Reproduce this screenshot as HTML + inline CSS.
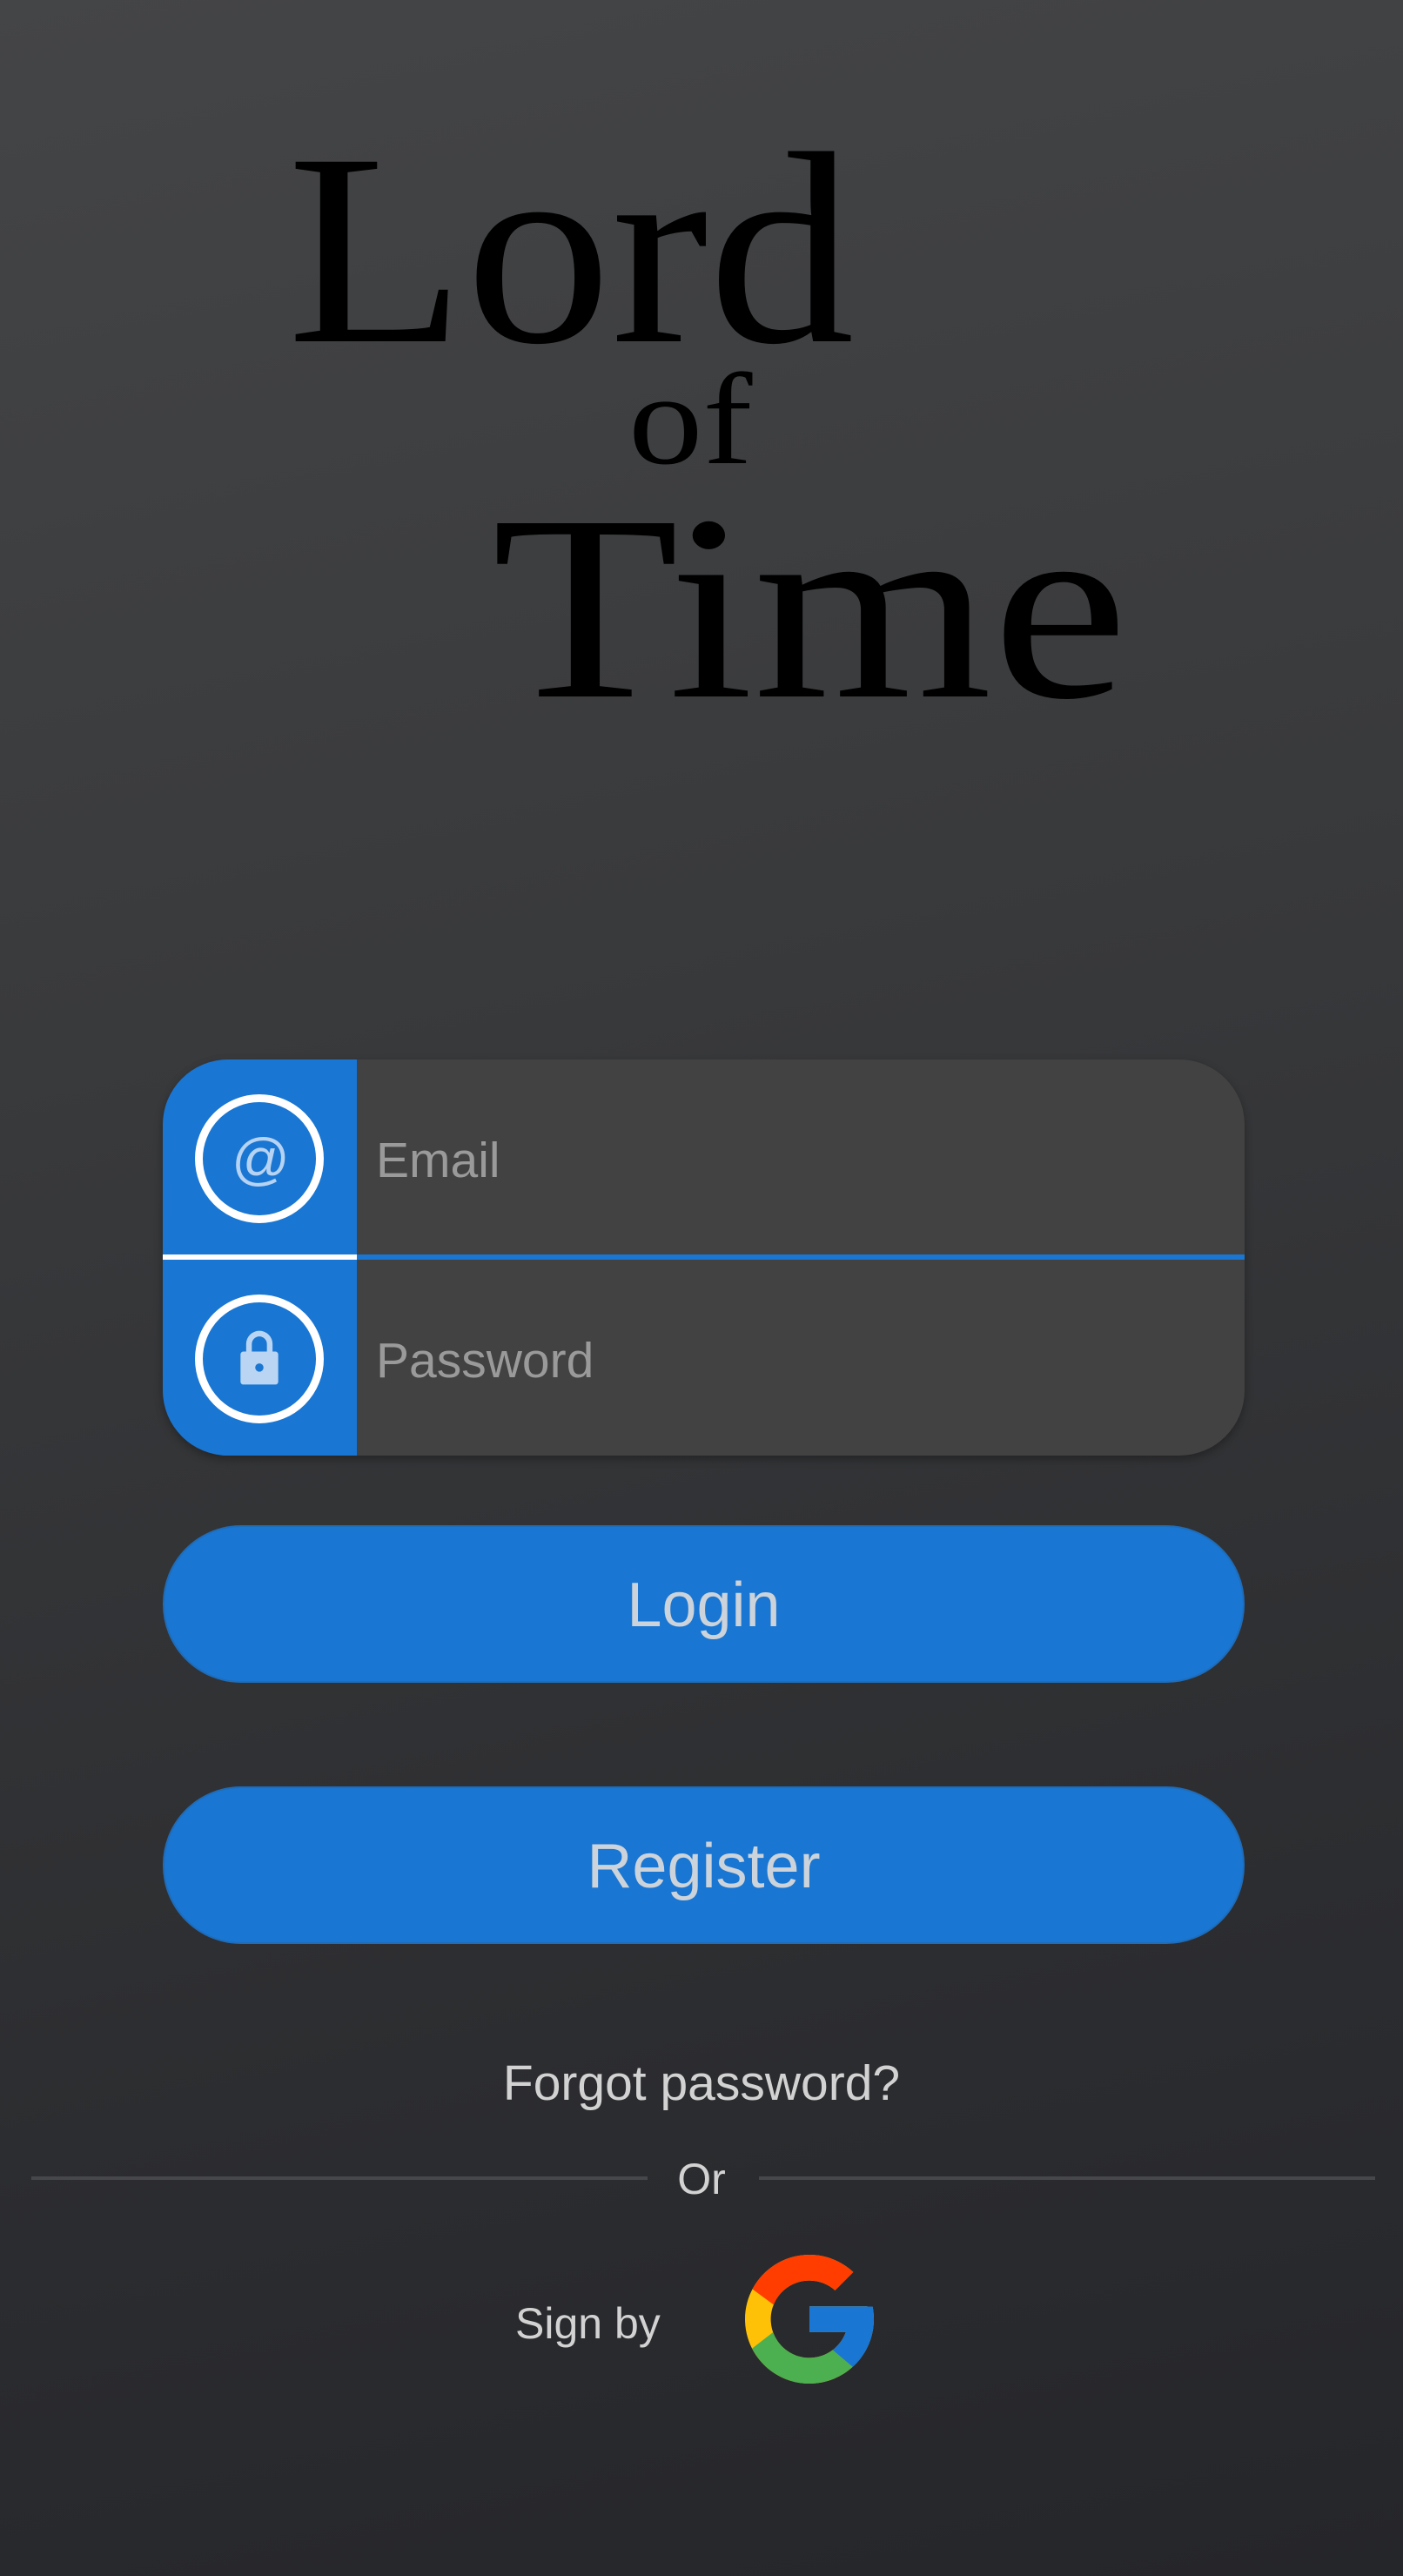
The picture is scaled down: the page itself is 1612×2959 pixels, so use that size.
<!DOCTYPE html>
<html><head><meta charset="utf-8"><style>
*{margin:0;padding:0;box-sizing:border-box}
html,body{width:1612px;height:2959px;overflow:hidden}
body{background:linear-gradient(168deg,#444547 0%,#38393b 40%,#2c2d30 75%,#25262a 100%);font-family:"Liberation Sans",sans-serif;position:relative}
.logo{position:absolute;font-family:"Liberation Serif",serif;color:#000;line-height:1;transform-origin:0 0;white-space:nowrap}
.box{position:absolute;left:187px;top:1217px;width:1243px;height:455px;border-radius:75px;overflow:hidden;background:#424242;box-shadow:0 4px 10px rgba(0,0,0,.3)}
.col{position:absolute;left:0;top:0;width:223px;height:100%;background:#1976d2}
.ring{position:absolute;width:148px;height:148px;border:9px solid #fff;border-radius:50%}
.ph{position:absolute;left:432px;font-size:57px;color:#9a9a9a}
.btn{position:absolute;left:187px;width:1243px;height:181px;border-radius:90px;background:#1976d2;color:#ccd3da;font-size:72px;text-align:center;line-height:181px;border:2px solid #1f6cb8}
.t{position:absolute;color:#d2d2d2;text-align:center}
.line{position:absolute;top:2500px;height:4px;background:#46474a}
</style></head><body>
<div class="logo" style="left:330px;top:129px;font-size:315px;transform:scaleX(1.064)">Lord</div>
<div class="logo" style="left:722px;top:407px;font-size:150px;transform:scaleX(1.14)">of</div>
<div class="logo" style="left:565px;top:546px;font-size:304px;transform:scaleX(1.159)">Time</div>

<div class="box">
 <div class="col"></div>
 <div style="position:absolute;left:0;top:224px;width:223px;height:6px;background:#fff"></div>
 <div style="position:absolute;left:223px;top:224px;width:1020px;height:6px;background:#1976d2"></div>
</div>
<div class="ring" style="left:224px;top:1257px"></div>
<div class="ring" style="left:224px;top:1487px"></div>
<div style="position:absolute;left:266px;top:1291px;font-size:66px;color:#b6d3f3;width:64px;text-align:center;line-height:80px">@</div>
<svg style="position:absolute;left:272px;top:1526px" width="52" height="66" viewBox="0 0 24 30"><path fill="#b9d5f3" d="M5 12V8a7 7 0 0 1 14 0v4h1.5a1.5 1.5 0 0 1 1.5 1.5V28a1.5 1.5 0 0 1-1.5 1.5h-17A1.5 1.5 0 0 1 2 28V13.5A1.5 1.5 0 0 1 3.5 12zM8 12h8V8a4 4 0 0 0-8 0z"/><circle cx="12" cy="20.5" r="2.2" fill="#1976d2"/></svg>
<div class="ph" style="top:1300px">Email</div>
<div class="ph" style="top:1530px">Password</div>

<div class="btn" style="top:1752px">Login</div>
<div class="btn" style="top:2052px">Register</div>

<div class="t" style="left:0;width:1612px;top:2360px;font-size:57px">Forgot password?</div>
<div class="line" style="left:36px;width:708px"></div>
<div class="line" style="left:872px;width:708px"></div>
<div class="t" style="left:0;width:1612px;top:2474px;font-size:50px">Or</div>
<div class="t" style="left:592px;top:2640px;font-size:50px">Sign by</div>
<svg style="position:absolute;left:856px;top:2590px" width="148" height="148" viewBox="4 4 40 40">
<path fill="#FFC107" d="M43.611,20.083H42V20H24v8h11.303c-1.649,4.657-6.08,8-11.303,8c-6.627,0-12-5.373-12-12c0-6.627,5.373-12,12-12c3.059,0,5.842,1.154,7.961,3.039l5.657-5.657C34.046,6.053,29.268,4,24,4C12.955,4,4,12.955,4,24c0,11.045,8.955,20,20,20c11.045,0,20-8.955,20-20C44,22.659,43.862,21.35,43.611,20.083z"/>
<path fill="#FF3D00" d="M6.306,14.691l6.571,4.819C14.655,15.108,18.961,12,24,12c3.059,0,5.842,1.154,7.961,3.039l5.657-5.657C34.046,6.053,29.268,4,24,4C16.318,4,9.656,8.337,6.306,14.691z"/>
<path fill="#4CAF50" d="M24,44c5.166,0,9.86-1.977,13.409-5.192l-6.19-5.238C29.211,35.091,26.715,36,24,36c-5.202,0-9.619-3.317-11.283-7.946l-6.522,5.025C9.505,39.556,16.227,44,24,44z"/>
<path fill="#1976D2" d="M43.611,20.083H42V20H24v8h11.303c-0.792,2.237-2.231,4.166-4.087,5.571l6.19,5.238C36.971,39.205,44,34,44,24C44,22.659,43.862,21.35,43.611,20.083z"/>
</svg>
</body></html>
